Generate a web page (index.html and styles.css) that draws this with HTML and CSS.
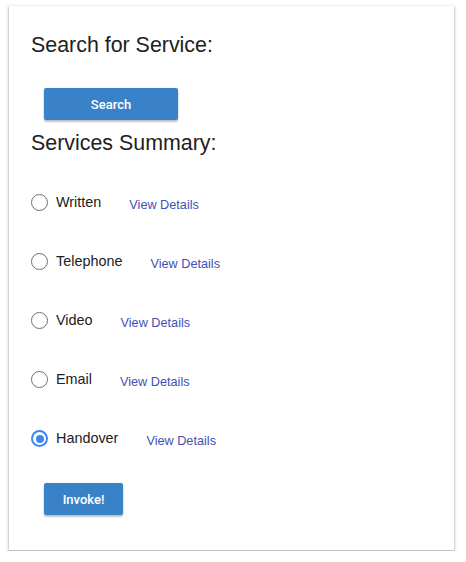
FILE: index.html
```html
<!DOCTYPE html>
<html>
<head>
<meta charset="utf-8">
<link rel="stylesheet" href="styles.css">
</head>
<body>
<div class="card">
  <h2 class="title">Search for Service:</h2>
  <button class="btn btn-search">Search</button>
  <h2 class="title title-summary">Services Summary:</h2>
  <div class="list">
    <div class="row"><label class="opt"><span class="radio"></span><span class="lbl">Written</span></label><a class="link">View Details</a></div>
    <div class="row"><label class="opt"><span class="radio"></span><span class="lbl">Telephone</span></label><a class="link">View Details</a></div>
    <div class="row"><label class="opt"><span class="radio"></span><span class="lbl">Video</span></label><a class="link">View Details</a></div>
    <div class="row"><label class="opt"><span class="radio"></span><span class="lbl">Email</span></label><a class="link">View Details</a></div>
    <div class="row"><label class="opt"><span class="radio checked"></span><span class="lbl">Handover</span></label><a class="link">View Details</a></div>
  </div>
  <button class="btn btn-invoke">Invoke!</button>
</div>
</body>
</html>
```
FILE: styles.css
```css
html, body { margin: 0; padding: 0; background: #fff; }
body { font-family: "Liberation Sans", Arial, sans-serif; color: #212121; }
.card {
  margin: 6px 0 0 9px;
  width: 445px;
  height: 545px;
  box-sizing: border-box;
  background: #fff;
  border-bottom: 1px solid #c4c4c4;
  box-shadow: 0 1px 2px rgba(0,0,0,0.3), 0 1px 3px 1px rgba(0,0,0,0.12);
  padding: 27px 22px 0 22px;
  display: flex;
  flex-direction: column;
  align-items: flex-start;
}
.title {
  margin: 0;
  font-size: 21.4px;
  font-weight: normal;
  line-height: 25px;
  color: #212121;
}
.title-summary { margin-top: 11px; }
.btn {
  border: none;
  border-radius: 2px;
  background: #3a82c8;
  color: #fff;
  font-family: Roboto, "Liberation Sans", sans-serif;
  font-weight: 500;
  font-size: 13px;
  height: 32px;
  padding: 0;
  margin-left: 13px;
  box-shadow: 0 2px 2px rgba(0,0,0,0.24), 0 0 2px rgba(0,0,0,0.12);
}
.btn-search { width: 134px; margin-top: 30px; }
.btn-invoke { width: 79px; margin-top: 15px; }
.list { display: flex; flex-direction: column; margin-top: 17px; }
.row { display: flex; align-items: center; height: 59px; }
.opt { display: flex; align-items: center; }
.radio {
  width: 17px; height: 17px;
  box-sizing: border-box;
  border: 1.5px solid #6f6f6f;
  border-radius: 50%;
  margin-right: 8px;
  position: relative;
}
.radio.checked { border-color: #3d86f0; border-width: 2px; }
.radio.checked::after {
  content: "";
  position: absolute;
  left: 2.5px; top: 2.5px;
  width: 8px; height: 8px;
  border-radius: 50%;
  background: #3d86f0;
}
.lbl { font-size: 14.4px; color: #212121; position: relative; top: -1px; }
.link {
  font-size: 12.7px;
  color: #3f51b5;
  margin-left: 28px;
  position: relative;
  top: 2px;
  cursor: pointer;
}
```
